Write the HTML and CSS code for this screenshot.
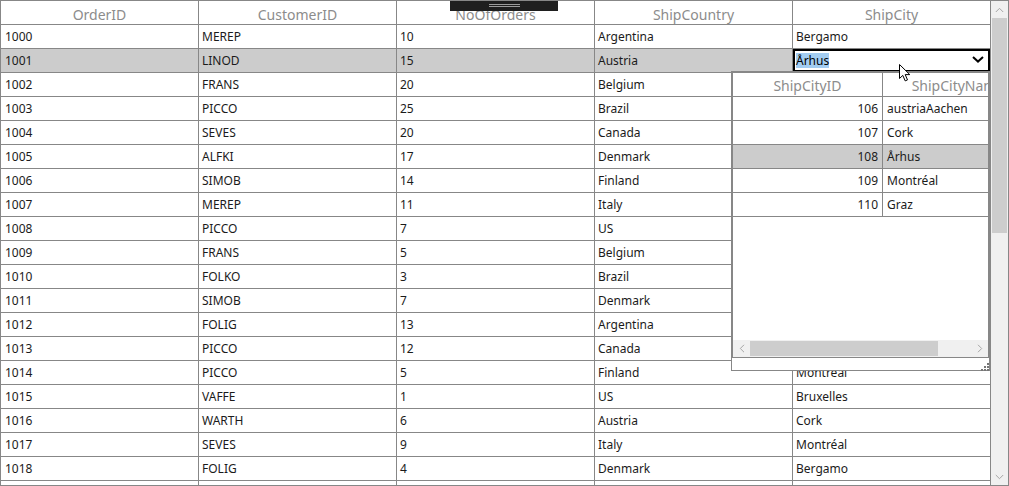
FILE: index.html
```html
<!DOCTYPE html>
<html lang="en">
<head>
<meta charset="utf-8">
<title>Orders</title>
<link rel="stylesheet" href="styles.css">
</head>
<body>
<div class="datagrid">
  <div class="grid-body">
    <div class="row head">
      <div class="cell">OrderID</div><div class="cell">CustomerID</div><div class="cell">NoOfOrders</div><div class="cell">ShipCountry</div><div class="cell">ShipCity</div>
    </div>
    <div class="row"><div class="cell">1000</div><div class="cell">MEREP</div><div class="cell">10</div><div class="cell">Argentina</div><div class="cell">Bergamo</div></div>
    <div class="row sel"><div class="cell">1001</div><div class="cell">LINOD</div><div class="cell">15</div><div class="cell">Austria</div>
      <div class="cell edit"><span class="hl">Århus</span>
        <svg class="chev" width="12" height="7" viewBox="0 0 12 7"><path d="M1 1 L6 5.6 L11 1" fill="none" stroke="#000" stroke-width="2"/></svg>
      </div>
    </div>
    <div class="row"><div class="cell">1002</div><div class="cell">FRANS</div><div class="cell">20</div><div class="cell">Belgium</div><div class="cell">Bruxelles</div></div>
    <div class="row"><div class="cell">1003</div><div class="cell">PICCO</div><div class="cell">25</div><div class="cell">Brazil</div><div class="cell">Graz</div></div>
    <div class="row"><div class="cell">1004</div><div class="cell">SEVES</div><div class="cell">20</div><div class="cell">Canada</div><div class="cell">Montréal</div></div>
    <div class="row"><div class="cell">1005</div><div class="cell">ALFKI</div><div class="cell">17</div><div class="cell">Denmark</div><div class="cell">Århus</div></div>
    <div class="row"><div class="cell">1006</div><div class="cell">SIMOB</div><div class="cell">14</div><div class="cell">Finland</div><div class="cell">Cork</div></div>
    <div class="row"><div class="cell">1007</div><div class="cell">MEREP</div><div class="cell">11</div><div class="cell">Italy</div><div class="cell">Bergamo</div></div>
    <div class="row"><div class="cell">1008</div><div class="cell">PICCO</div><div class="cell">7</div><div class="cell">US</div><div class="cell">Bruxelles</div></div>
    <div class="row"><div class="cell">1009</div><div class="cell">FRANS</div><div class="cell">5</div><div class="cell">Belgium</div><div class="cell">Bruxelles</div></div>
    <div class="row"><div class="cell">1010</div><div class="cell">FOLKO</div><div class="cell">3</div><div class="cell">Brazil</div><div class="cell">Graz</div></div>
    <div class="row"><div class="cell">1011</div><div class="cell">SIMOB</div><div class="cell">7</div><div class="cell">Denmark</div><div class="cell">Århus</div></div>
    <div class="row"><div class="cell">1012</div><div class="cell">FOLIG</div><div class="cell">13</div><div class="cell">Argentina</div><div class="cell">Bergamo</div></div>
    <div class="row"><div class="cell">1013</div><div class="cell">PICCO</div><div class="cell">12</div><div class="cell">Canada</div><div class="cell">Montréal</div></div>
    <div class="row"><div class="cell">1014</div><div class="cell">PICCO</div><div class="cell">5</div><div class="cell">Finland</div><div class="cell">Montréal</div></div>
    <div class="row"><div class="cell">1015</div><div class="cell">VAFFE</div><div class="cell">1</div><div class="cell">US</div><div class="cell">Bruxelles</div></div>
    <div class="row"><div class="cell">1016</div><div class="cell">WARTH</div><div class="cell">6</div><div class="cell">Austria</div><div class="cell">Cork</div></div>
    <div class="row"><div class="cell">1017</div><div class="cell">SEVES</div><div class="cell">9</div><div class="cell">Italy</div><div class="cell">Montréal</div></div>
    <div class="row"><div class="cell">1018</div><div class="cell">FOLIG</div><div class="cell">4</div><div class="cell">Denmark</div><div class="cell">Bergamo</div></div>
    <div class="row"><div class="cell"></div><div class="cell"></div><div class="cell"></div><div class="cell"></div><div class="cell"></div></div>
  </div>

  <div class="vscroll">
    <div class="sb-btn">
      <svg width="9" height="6" viewBox="0 0 9 6"><path d="M0.8 5 L4.5 1.3 L8.2 5" fill="none" stroke="#a6a6a6" stroke-width="1"/></svg>
    </div>
    <div class="vthumb"></div>
    <div class="vtrack"></div>
    <div class="sb-btn">
      <svg width="9" height="6" viewBox="0 0 9 6"><path d="M0.8 1 L4.5 4.7 L8.2 1" fill="none" stroke="#a6a6a6" stroke-width="1"/></svg>
    </div>
  </div>

  <div class="drag-handle"><span></span><span></span></div>

  <div class="city-popup">
    <div class="pgrid">
      <div class="pview">
        <div class="prow phead"><div class="pcell">ShipCityID</div><div class="pcell">ShipCityName</div></div>
        <div class="prow"><div class="pcell num">106</div><div class="pcell">austriaAachen</div></div>
        <div class="prow"><div class="pcell num">107</div><div class="pcell">Cork</div></div>
        <div class="prow psel"><div class="pcell num">108</div><div class="pcell">Århus</div></div>
        <div class="prow"><div class="pcell num">109</div><div class="pcell">Montréal</div></div>
        <div class="prow"><div class="pcell num">110</div><div class="pcell">Graz</div></div>
      </div>
      <div class="hscroll">
        <div class="sb-btn">
          <svg width="6" height="9" viewBox="0 0 6 9"><path d="M5 0.8 L1.3 4.5 L5 8.2" fill="none" stroke="#a6a6a6" stroke-width="1"/></svg>
        </div>
        <div class="hthumb"></div>
        <div class="htrack"></div>
        <div class="sb-btn">
          <svg width="6" height="9" viewBox="0 0 6 9"><path d="M1 0.8 L4.7 4.5 L1 8.2" fill="none" stroke="#a6a6a6" stroke-width="1"/></svg>
        </div>
      </div>
    </div>
    <div class="pfoot">
      <svg class="grip" width="11" height="9" viewBox="0 0 11 9">
        <rect x="8" y="1" width="2" height="2" fill="#767676"/>
        <rect x="5" y="4" width="2" height="2" fill="#767676"/>
        <rect x="8" y="4" width="2" height="2" fill="#767676"/>
        <rect x="2" y="7" width="2" height="2" fill="#767676"/>
        <rect x="5" y="7" width="2" height="2" fill="#767676"/>
        <rect x="8" y="7" width="2" height="2" fill="#767676"/>
      </svg>
    </div>
  </div>

  <svg class="pointer" width="13" height="19" viewBox="0 0 13 19">
    <path d="M0.5 0.5 L0.5 14.5 L3.8 11.4 L6.2 16.9 L8.5 15.9 L6.2 10.6 L10.8 10.6 Z" fill="#fff" stroke="#000" stroke-width="1" stroke-linejoin="miter"/>
  </svg>
</div>
</body>
</html>
```

FILE: styles.css
```css
html, body {
  margin: 0;
  background: #ffffff;
}

body {
  font-family: "Noto Sans", "Open Sans", sans-serif;
}

/* Main order grid */
.datagrid {
  position: relative;
  width: 1009px;
  height: 486px;
  box-sizing: border-box;
  border: 1px solid #878787;
  display: flex;
  overflow: hidden;
  background: #fff;
}

.grid-body {
  width: 990px;
  flex: none;
  display: flex;
  flex-direction: column;
  overflow: hidden;
}

.row {
  display: grid;
  grid-template-columns: repeat(5, 198px);
  height: 24px;
  flex: none;
}

.cell {
  box-sizing: border-box;
  border-right: 1px solid #878787;
  border-bottom: 1px solid #878787;
  padding: 1px 0 0 4px;
  font-size: 12px;
  line-height: 21px;
  color: #1b1b1b;
  white-space: nowrap;
  overflow: hidden;
}

.cell + .cell {
  padding-left: 3px;
}

.head .cell {
  padding: 3px 0 0;
  text-align: center;
  font-size: 14px;
  line-height: 21px;
  color: #8c8c8c;
}

.sel .cell {
  background: #cccccc;
}

/* In-place drop-down editor */
.sel .cell.edit {
  display: flex;
  align-items: flex-start;
  padding: 4px 0 0 3px;
  background: #fff;
  box-shadow: inset 0 0 0 2px #000;
}

.hl {
  display: inline-block;
  line-height: 15px;
  background: #a3cdf2;
  color: #000;
}

.chev {
  margin: 3px 6px 0 auto;
  flex: none;
}

/* Vertical scrollbar */
.vscroll {
  width: 17px;
  flex: none;
  display: flex;
  flex-direction: column;
  background: #f0f0f0;
}

.sb-btn {
  width: 17px;
  height: 17px;
  flex: none;
  display: flex;
  align-items: center;
  justify-content: center;
  background: #f0f0f0;
}

.vthumb {
  height: 215px;
  margin: 0 1px;
  background: #cdcdcd;
  flex: none;
}

.vtrack {
  flex: 1;
}

/* Column drag handle on the header */
.drag-handle {
  position: absolute;
  top: -1px;
  left: 449px;
  width: 108px;
  height: 11px;
  background: #1f1f1f;
  display: flex;
  flex-direction: column;
  align-items: center;
  padding-top: 4px;
  gap: 1px;
  box-sizing: border-box;
}

.drag-handle span {
  width: 31px;
  height: 1px;
  background: #9c9c9c;
}

/* Drop-down list of cities */
.city-popup {
  position: absolute;
  left: 730px;
  top: 70px;
  width: 259px;
  height: 300px;
  box-sizing: border-box;
  border: 1px solid #878787;
  background: #fff;
  display: flex;
  flex-direction: column;
}

.pgrid {
  height: 286px;
  flex: none;
  box-sizing: border-box;
  border: 1px solid #878787;
  display: flex;
  flex-direction: column;
}

.pview {
  flex: 1;
  overflow: hidden;
}

.prow {
  display: grid;
  grid-template-columns: 150px 150px;
  width: 300px;
  height: 24px;
}

.pcell {
  box-sizing: border-box;
  border-bottom: 1px solid #878787;
  padding: 1px 4px 0;
  font-size: 12px;
  line-height: 21px;
  color: #1b1b1b;
  white-space: nowrap;
  overflow: hidden;
}

.pcell:first-child {
  border-right: 1px solid #878787;
}

.pcell.num {
  text-align: right;
}

.phead .pcell {
  padding: 2px 0 0;
  text-align: center;
  font-size: 14px;
  color: #8c8c8c;
}

.psel .pcell {
  background: #cccccc;
}

.hscroll {
  height: 17px;
  flex: none;
  display: flex;
  background: #f0f0f0;
}

.hthumb {
  width: 188px;
  margin: 1px 0;
  background: #cdcdcd;
}

.htrack {
  flex: 1;
}

.pfoot {
  flex: 1;
  position: relative;
}

.grip {
  position: absolute;
  right: -1px;
  bottom: -1px;
}

/* Mouse pointer over the editor */
.pointer {
  position: absolute;
  left: 898px;
  top: 63px;
}
```
